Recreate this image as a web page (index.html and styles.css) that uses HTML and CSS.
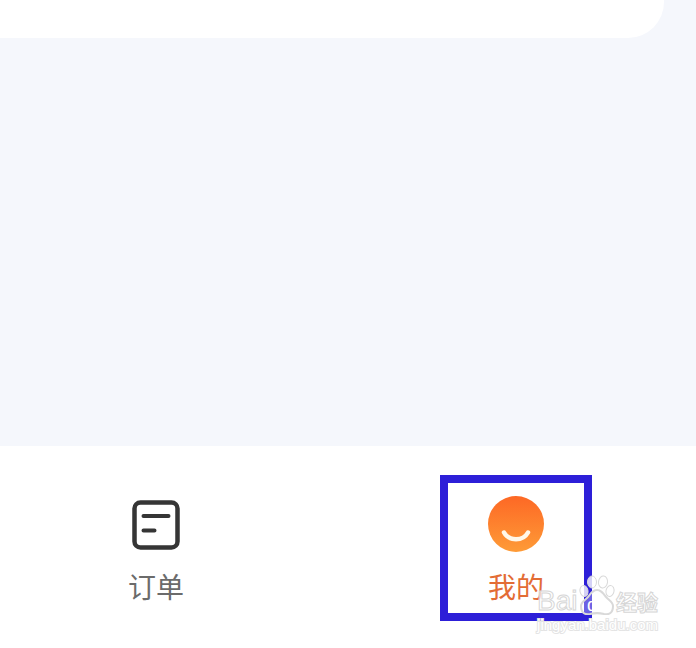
FILE: index.html
```html
<!DOCTYPE html>
<html lang="zh-CN">
<head>
<meta charset="utf-8">
<meta name="viewport" content="width=device-width, initial-scale=1">
<title>我的</title>
<link rel="stylesheet" href="styles.css">
</head>
<body>
<main class="content"><section class="card"></section></main>
<nav class="tabs">
  <button class="tab" type="button">
    <svg class="icon" viewBox="0 0 56 56" aria-hidden="true">
      <rect x="6.500" y="6.500" width="43" height="45" rx="6" fill="none" stroke="#353535" stroke-width="4.500"/>
      <path d="M15.500 20H40.500M15.500 34.500H26.500" fill="none" stroke="#353535" stroke-width="4" stroke-linecap="round"/>
    </svg>
    <span>订单</span>
  </button>
  <button class="tab active" type="button">
    <svg class="icon" viewBox="0 0 56 56" aria-hidden="true">
      <defs><linearGradient id="face" x1="0" y1="0" x2="0" y2="1"><stop offset="0" stop-color="#fd6825"/><stop offset="1" stop-color="#fe9b37"/></linearGradient></defs>
      <circle cx="28" cy="28" r="28" fill="url(#face)"/>
      <path d="M16 36.500C21 45.500 35 45.500 40 36.500" fill="none" stroke="#fff7e8" stroke-width="4.500" stroke-linecap="round"/>
    </svg>
    <span>我的</span>
  </button>
  <div class="watermark">
    <div class="brand">
      <span>Bai</span>
      <svg class="paw" viewBox="0 0 36 40" aria-hidden="true">
        <g class="pads">
          <ellipse cx="5" cy="16" rx="4" ry="5.500" transform="rotate(-12 5 16)"/>
          <ellipse cx="13" cy="7" rx="4.500" ry="6"/>
          <ellipse cx="24" cy="7" rx="4.500" ry="6" transform="rotate(8 24 7)"/>
          <ellipse cx="31" cy="16" rx="4" ry="5.500" transform="rotate(12 31 16)"/>
        </g>
        <path class="palm" d="M2 31C2 27 6 25 9 22C12 18 14 15 18 15C22 15 24 18 27 22C30 25 34 27 34 31C34 38 30 40 25 39C21 38 15 38 11 39C6 40 2 38 2 31Z"/>
        <text class="du" x="18" y="36" text-anchor="middle">du</text>
      </svg>
      <span class="cn">经验</span>
    </div>
    <div class="site">jingyan.baidu.com</div>
  </div>
</nav>
</body>
</html>
```
FILE: styles.css
```css
* { box-sizing: border-box; }
body {
  margin: 0;
  min-height: 100vh;
  display: flex;
  flex-direction: column;
  background: #f5f7fc;
  font-family: "Liberation Sans", "Noto Sans CJK SC", sans-serif;
}
.content { flex: 1; padding-right: 32px; }
.card { height: 38px; background: #fff; border-bottom-right-radius: 36px; }
.tabs {
  position: relative;
  display: grid;
  grid-template-columns: 13fr 15fr;
  column-gap: 24px;
  justify-items: center;
  padding: 29px 0 27px;
  background: #fff;
}
.tab {
  display: flex;
  flex-direction: column;
  align-items: center;
  gap: 14px;
  width: 152px;
  height: 146px;
  padding: 13px 0 0;
  border: 8px solid transparent;
  background: transparent;
  color: #6b6b6b;
  font: 28px/40px "Noto Sans CJK SC", sans-serif;
}
.tab.active { border-color: #2d1fd8; color: #e36c35; }
.icon { display: block; width: 56px; height: 56px; flex: none; }
.watermark {
  position: absolute;
  right: 38px;
  bottom: 13px;
  color: rgba(255, 255, 255, .7);
  -webkit-text-stroke: 1px #d6d6d6;
  pointer-events: none;
}
.brand {
  display: flex;
  align-items: flex-end;
  justify-content: space-between;
  font: 28px/28px "Liberation Sans", sans-serif;
}
.paw { width: 36px; height: 40px; }
.pads, .palm { stroke: #d9d9d9; stroke-width: 1; }
.pads { fill: rgba(255, 255, 255, .8); }
.palm { fill: rgba(255, 255, 255, .3); stroke-width: 2; }
.du { font-size: 18px; fill: #fff; }
.cn { font: bold 21px/28px "Noto Sans CJK SC", sans-serif; }
.site { color: #fff; font-size: 15px; line-height: 20px; paint-order: stroke fill; -webkit-text-stroke: 2px #e4e4e4; }
```
